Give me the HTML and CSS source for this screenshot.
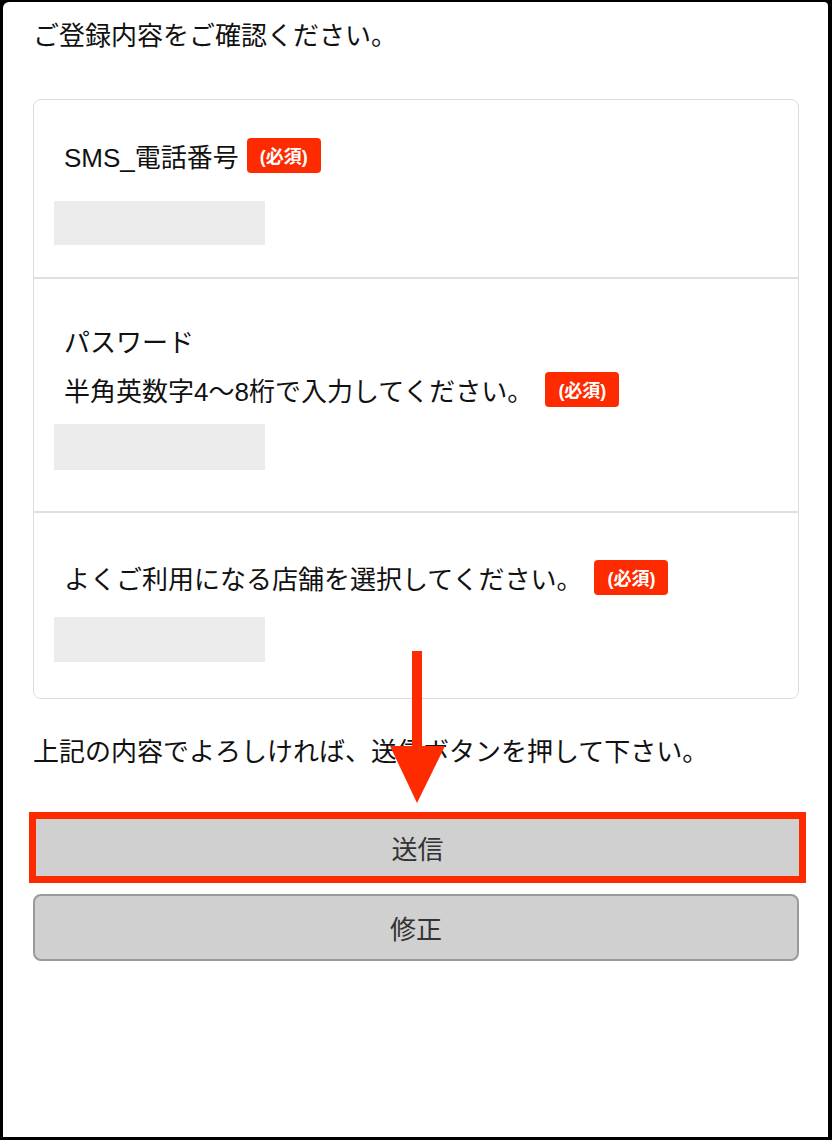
FILE: index.html
```html
<!DOCTYPE html>
<html lang="ja">
<head>
    <meta charset="UTF-8">
    <meta name="viewport" content="width=device-width, initial-scale=1.0">
    <title>ご登録内容の確認</title>
    <link rel="stylesheet" href="styles.css">
</head>
<body>
    <div class="screen">
        <p class="lead">ご登録内容をご確認ください。</p>

        <div class="card">
            <div class="field field-sms">
                <div class="field-label">SMS_電話番号<span class="badge">(必須)</span></div>
                <div class="field-value"></div>
            </div>
            <div class="field field-pass">
                <div class="field-label">パスワード</div>
                <div class="field-label field-label-sub">半角英数字4〜8桁で入力してください。<span class="badge">(必須)</span></div>
                <div class="field-value"></div>
            </div>
            <div class="field field-shop">
                <div class="field-label">よくご利用になる店舗を選択してください。<span class="badge">(必須)</span></div>
                <div class="field-value"></div>
            </div>
        </div>

        <p class="note">上記の内容でよろしければ、送信ボタンを押して下さい。</p>

        <button class="btn btn-send" type="button">送信</button>
        <button class="btn" type="button">修正</button>

        <!-- 注釈の矢印 -->
        <svg class="arrow" width="60" height="160" viewBox="0 0 60 160">
            <rect x="24" y="3" width="10" height="100" fill="#fe2a00"/>
            <polygon points="2,98 57,98 29,155" fill="#fe2a00"/>
        </svg>
    </div>
</body>
</html>
```

FILE: styles.css
```css
* {
    margin: 0;
    padding: 0;
    box-sizing: border-box;
}

body {
    font-family: "Liberation Sans", "Noto Sans CJK JP", sans-serif;
    background: #000;
    color: #111;
}

.screen {
    position: relative;
    height: 1135px;
    margin: 2px 4px 3px 3px;
    padding: 0 29px 0 30px;
    background: #fff;
    border-radius: 6px 4px 0 0;
}

.lead {
    font-size: 26px;
    line-height: 40px;
    padding-top: 14px;
}

.card {
    margin-top: 43px;
    border: 1px solid #dcdcdc;
    border-radius: 8px;
}

.field {
    padding: 0 20px;
}

.field + .field {
    border-top: 2px solid #e0e0e0;
}

.field-sms {
    padding-top: 35px;
    padding-bottom: 32px;
}

.field-pass {
    padding-top: 41px;
    padding-bottom: 41px;
}

.field-shop {
    padding-top: 44px;
    padding-bottom: 36px;
}

.field-label {
    display: flex;
    align-items: center;
    height: 40px;
    padding-left: 10px;
    font-size: 26px;
}

.field-label-sub {
    margin-top: 9px;
}

.badge {
    display: inline-flex;
    align-items: center;
    height: 35px;
    margin-left: 10px;
    padding: 0 13px;
    background: #fe2a00;
    color: #fff;
    font-size: 18px;
    font-weight: bold;
    border-radius: 4px;
}

.field-sms .badge {
    margin-left: 8px;
}

.field-label-sub .badge,
.field-shop .badge {
    margin-left: 12px;
}

.field-value {
    width: 211px;
    height: 45px;
    background: #ebebeb;
}

.field-sms .field-value {
    margin-top: 26px;
    height: 44px;
}

.field-pass .field-value {
    margin-top: 15px;
    height: 46px;
}

.field-shop .field-value {
    margin-top: 20px;
}

.note {
    margin-top: 33px;
    font-size: 26px;
    line-height: 40px;
}

.btn {
    display: block;
    width: 100%;
    height: 67px;
    background: #d0d0d0;
    border: 2px solid #9a9a9a;
    border-radius: 8px;
    font-family: inherit;
    font-size: 26px;
    color: #333;
}

.btn-send {
    width: calc(100% + 11px);
    height: 71px;
    margin: 40px -7px 11px -4px;
    border: 7px solid #fe2a00;
    border-radius: 0;
}

.arrow {
    position: absolute;
    left: 385px;
    top: 646px;
}
```
